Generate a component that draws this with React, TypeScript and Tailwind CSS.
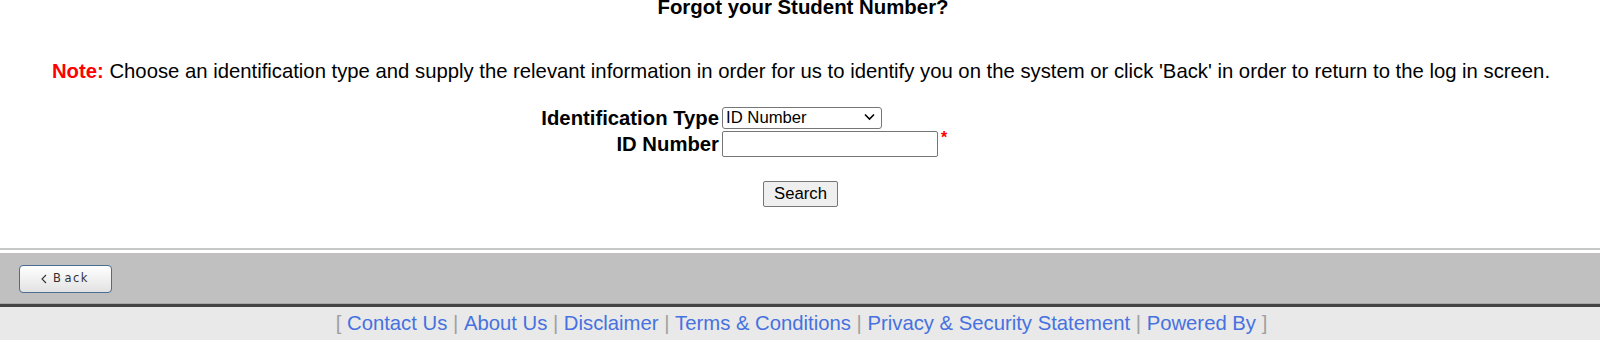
import React from "react";

const links = [
  "Contact Us",
  "About Us",
  "Disclaimer",
  "Terms & Conditions",
  "Privacy & Security Statement",
  "Powered By",
];

export default function App() {
  return (
    <div className="w-[1600px] h-[343px] overflow-hidden bg-white font-['Liberation_Sans',Arial,sans-serif] text-black">
      {/* Title */}
      <div className="mt-[-4px] h-[23px] pl-[6px] text-center text-[20.4px] font-bold leading-[23px]">
        Forgot your Student Number?
      </div>

      {/* Note */}
      <p className="mt-[41px] pl-[2px] text-center text-[20.3px] leading-[23px]">
        <span className="font-bold text-[#ff0000]">Note:</span> Choose an
        identification type and supply the relevant information in order for
        us to identify you on the system or click 'Back' in order to return to
        the log in screen.
      </p>

      {/* Form */}
      <div className="mt-[23px] grid grid-cols-[719px_auto] items-center gap-x-[3px] gap-y-0">
        <label className="text-right text-[20.3px] font-bold leading-[22px]">
          Identification Type
        </label>
        <div className="relative w-[160px]">
          <select
            defaultValue="id"
            className="h-[22px] w-[160px] appearance-none rounded-[3px] border border-[#767676] bg-white pl-[3px] text-[16.7px] leading-[20px] outline-none"
          >
            <option value="id">ID Number</option>
            <option value="passport">Passport Number</option>
          </select>
          <svg
            className="pointer-events-none absolute right-[7px] top-[7px]"
            width="11"
            height="8"
            viewBox="0 0 11 8"
          >
            <path d="M1 1.5l4.5 4.5 4.5-4.5" fill="none" stroke="#000" strokeWidth="1.6" />
          </svg>
        </div>
        <label className="text-right text-[20.3px] font-bold leading-[26px]">
          ID Number
        </label>
        <div className="flex items-start pt-[1px]">
          <input
            type="text"
            className="h-[26px] w-[216px] rounded-[2px] border border-[#767676] bg-white px-[2px] text-[16.7px] outline-none"
          />
          <span className="ml-[3px] mt-[-2px] text-[16px] font-bold leading-[18px] text-[#ff0000]">*</span>
        </div>
      </div>

      <div className="mt-[24px] flex justify-center pl-[1px]">
        <button className="h-[26px] w-[75px] rounded-[2px] border border-[#767676] bg-[#efefef] text-[16.7px] leading-[22px]">
          Search
        </button>
      </div>

      {/* Divider */}
      <div className="mt-[41px] h-[2px] bg-[#c6c8c8]" />

      {/* Button bar */}
      <div className="mt-[3px] flex h-[51px] items-center border-b border-[#a8a8a8] bg-[#c0c0c0] pl-[19px]">
        <button className="mt-[1px] flex h-[28px] w-[93px] items-center rounded-[4px] border-[1.5px] border-[#4a6d92] bg-gradient-to-b from-white to-[#e2e2e2] pl-[21px] font-['DejaVu_Sans',Verdana,sans-serif] text-[11.5px] tracking-[1.5px] text-[#333]">
          <svg width="6" height="10" viewBox="0 0 6 10" className="mr-[6px]">
            <path d="M5 1L1 5l4 4" fill="none" stroke="#333" strokeWidth="1.1" />
          </svg>
          B<span className="ml-[2px]">ack</span>
        </button>
      </div>
      <div className="h-[3px] bg-[#444]" />

      {/* Footer */}
      <div className="flex h-[33px] items-center justify-center bg-[#e9e9e9] pl-[3px] text-[20.3px] leading-[23px] text-[#a0a0a0]">
        <span>[&nbsp;</span>
        {links.map((l, i) => (
          <React.Fragment key={l}>
            <a href="#" className="text-[#4671e0]">
              {l}
            </a>
            {i < links.length - 1 ? <span>&nbsp;|&nbsp;</span> : null}
          </React.Fragment>
        ))}
        <span>&nbsp;]</span>
      </div>
    </div>
  );
}
